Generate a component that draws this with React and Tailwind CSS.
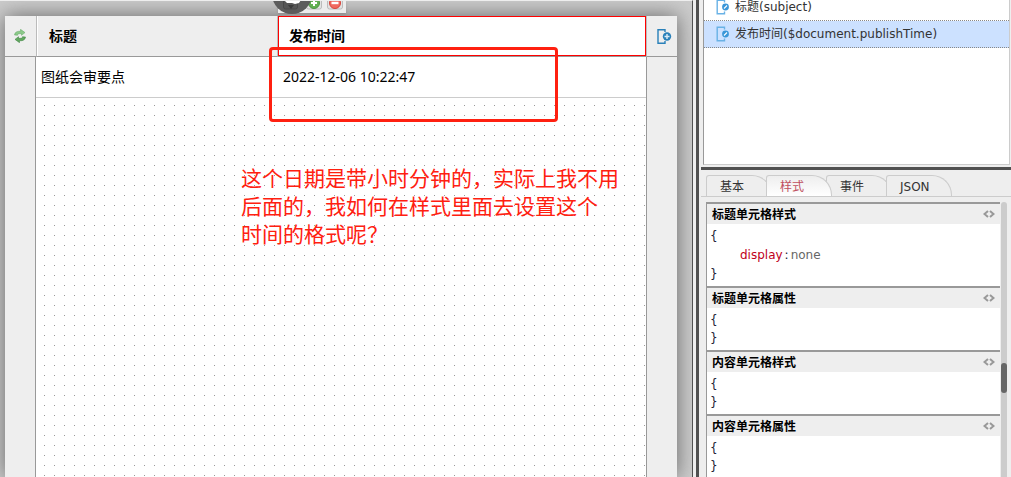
const fields = [
    { id: 'subject', label: '标题(subject)' },
    { id: 'publishTime', label: '发布时间($document.publishTime)', selected: true },
];

const tabs = ['基本', '样式', '事件', 'JSON'];

const sections = [
    { title: '标题单元格样式', rules: [{ name: 'display', value: 'none' }] },
    { title: '标题单元格属性', rules: [] },
    { title: '内容单元格样式', rules: [] },
    { title: '内容单元格属性', rules: [] },
];

const FieldIcon = () => (
    <svg width="13" height="16" viewBox="0 0 13 16" fill="none" className="shrink-0">
        <path d="M8.5 3.5V1.2H1.2v13.6h7.3v-2.3" stroke="#69b2e6" strokeWidth="1.4" />
        <circle cx="9.500" cy="8" r="3.400" fill="#3a96d8" />
        <path d="M8 9.500l3-3" stroke="#fff" strokeWidth="1.1" />
    </svg>
);

const AddColumnIcon = () => (
    <svg width="16" height="17" viewBox="0 0 16 17" fill="none" className="ml-[3px]">
        <path d="M9 4V1.700H2v13.600h7V13" stroke="#2980b9" strokeWidth="1.4" />
        <circle cx="11" cy="8.500" r="4.200" fill="#2980b9" />
        <path d="M11 6v5M8.500 8.500h5" stroke="#dcecf6" strokeWidth="1.4" />
    </svg>
);

const RefreshIcon = () => (
    <svg width="12" height="14" viewBox="0 0 12 14" className="mr-[2px]">
        <path d="M.5 6C.8 3 3 2.200 6.500 2.200V.3L11 3.600 7.500 6.300V4.700C4.500 4.500 3.500 4.900 3.500 6.300z" fill="#8cc98a" stroke="#5fa660" strokeWidth=".5" />
        <path d="M11.500 8C11.200 11 9 11.800 5.500 11.800v1.900L1 10.400l3.500-2.700v1.600C7.500 9.500 8.500 9.100 8.500 7.700z" fill="#62a860" stroke="#357c38" strokeWidth=".5" />
    </svg>
);

const CodeIcon = () => (
    <svg width="12" height="8" viewBox="0 0 12 8" fill="none" stroke="#999" strokeWidth="2">
        <path d="M5 1L1.500 4 5 7M7 1l3.500 3L7 7" />
    </svg>
);

const FloatingTools = () => (
    <div className="absolute left-[278px] top-0 h-[12px] w-[68px] bg-[#ececec] shadow">
        <svg width="96" height="16" viewBox="-24 0 96 16" className="absolute -left-[24px] -top-px max-w-none">
            <rect x="28.500" y="-6" width="15" height="15" rx="2" fill="#e2e2e2" stroke="#bbb" />
            <circle cx="36" cy="3" r="5.500" fill="#62b052" stroke="#4c9640" />
            <path d="M36 0v6M33 3h6" stroke="#fff" strokeWidth="2" />
            <rect x="49.500" y="-6" width="15" height="15" rx="2" fill="#e2e2e2" stroke="#bbb" />
            <circle cx="57" cy="3" r="5.500" fill="#f06a60" stroke="#d8443a" />
            <path d="M53.500 3h7" stroke="#fff" strokeWidth="2.400" />
            <circle cx="14" cy="-6" r="20" fill="#5c5c5c" />
            <rect x="5.500" y="-6" width="14" height="15" rx="2" fill="#555" stroke="#484848" />
            <path d="M10 5h6l-3 4z" fill="#3a3a3a" />
            <path d="M6 0h17L21 3l-4 1-3-1-5 0z" fill="#fff" />
        </svg>
    </div>
);

const Designer = () => (
    <main className="relative flex min-w-0 flex-1 flex-col overflow-hidden border-t border-r border-t-[#eee] border-r-[#505050] bg-[#ccc] px-[5px] pt-[15px] pr-[15px]">
        <div className="flex-1 bg-white shadow-[0_0_20px_#666]">
            <table className="h-full w-full table-fixed border-separate border-spacing-0 text-left text-sm text-black">
                <colgroup>
                    <col className="w-[31px]" />
                    <col className="w-[241px]" />
                    <col />
                    <col className="w-[31px]" />
                </colgroup>
                <thead>
                    <tr className="h-[41px] bg-[#eee]">
                        <th className="border-b border-[#999] p-0">
                            <button type="button" aria-label="refresh" className="flex w-full justify-center">
                                <RefreshIcon />
                            </button>
                        </th>
                        <th className="border-b border-l border-b-[#999] border-l-[#bbb] px-3 py-0 shadow-[inset_1px_0_#fff]">标题</th>
                        <th className="border-b border-l border-b-[#999] border-l-[#bbb] p-0">
                            <div className="flex h-10 items-center border border-[#f00] bg-white px-[10px]">发布时间</div>
                        </th>
                        <th className="border-b border-l border-b-[#999] border-l-[#bbb] p-0">
                            <button type="button" aria-label="add column" className="flex w-full justify-center">
                                <AddColumnIcon />
                            </button>
                        </th>
                    </tr>
                </thead>
                <tbody>
                    <tr className="h-[41px]">
                        <td className="border-r border-[#999] bg-[#eee] p-0" />
                        <td className="border-b border-[#ccc] px-[5px] py-0">图纸会审要点</td>
                        <td className="border-b border-[#ccc] px-[6px] py-0">2022-12-06 10:22:47</td>
                        <td className="border-l border-[#999] bg-[#eee] p-0" />
                    </tr>
                    <tr>
                        <td className="border-r border-[#999] bg-[#eee] p-0" />
                        <td colSpan={2} className="bg-[conic-gradient(from_270deg_at_1px_1px,#999_90deg,transparent_0)] bg-[length:10px_10px] bg-[position:8px_7px] p-0" />
                        <td className="border-l border-[#999] bg-[#eee] p-0" />
                    </tr>
                </tbody>
            </table>
        </div>

        <FloatingTools />

        {/* Annotation */}
        <div className="absolute top-[46px] left-[269px] h-[75px] w-[289px] rounded-[4px] border-3 border-[#ff2010]" />
        <p className="absolute top-[163px] left-[241px] text-[21px] leading-7 whitespace-nowrap text-[#ff2010]">
            这个日期是带小时分钟的，实际上我不用
            <br />
            后面的，我如何在样式里面去设置这个
            <br />
            时间的格式呢？
        </p>
    </main>
);

const FieldList = () => (
    <div className="mr-px ml-[2px] h-[165px] shrink-0 overflow-hidden border-b border-l border-r border-b-[#ccc] border-l-[#999] border-r-[#ccc] bg-white">
        <ul className="-mt-[6px]">
            {fields.map((field) => (
                <li key={field.id} className={field.selected ? 'bg-[#cce1ff]' : 'bg-white'}>
                    <a href="#" className="flex h-[27px] items-center gap-[6px] border-b border-dotted border-[#888] pl-3 text-[#333]">
                        <FieldIcon />
                        {field.label}
                    </a>
                </li>
            ))}
        </ul>
    </div>
);

const Tabs = () => (
    <div role="tablist" className="flex h-[27px] shrink-0 items-end border-b border-[#ccc] pl-[5px]">
        {tabs.map((tab) => {
            const active = tab === '样式';
            return (
                <button
                    key={tab}
                    type="button"
                    role="tab"
                    aria-selected={active}
                    className={
                        active
                            ? 'relative z-10 -mr-[6px] h-[21px] w-[66px] rounded-tl-[3px] rounded-tr-[20px] border border-b-0 border-[#ccc] bg-linear-to-b from-[#eee] to-white pt-[2px] pl-[13px] text-left text-[#c05060]'
                            : 'relative -mr-[6px] h-[21px] w-[66px] rounded-tl-[3px] rounded-tr-[20px] border border-b-0 border-[#ccc] bg-[#eee] pt-[2px] pl-[13px] text-left text-[#333]'
                    }
                >
                    {tab}
                </button>
            );
        })}
    </div>
);

const StyleSection = ({ title, rules }) => (
    <section className="border-t-2 border-l border-[#999]">
        <div className="flex h-5 items-center justify-between bg-[#eee] pr-[5px] pl-[5px]">
            <h2 className="pt-[2px] font-bold text-black">{title}</h2>
            <button type="button" aria-label="edit source">
                <CodeIcon />
            </button>
        </div>
        <div className="bg-white py-[3px] pl-[3px] leading-[18px] text-[#223]">
            <div>{'{'}</div>
            {rules.map((rule) => (
                <div key={rule.name} className="pl-[30px] leading-5">
                    <span className="text-[#c00020]">{rule.name}</span>
                    <span className="px-[2px]">:</span>
                    <span className="text-[#666]">{rule.value}</span>
                </div>
            ))}
            <div>{'}'}</div>
        </div>
    </section>
);

const Inspector = () => (
    <aside className="ml-[2px] flex w-[310px] shrink-0 flex-col text-xs [font-family:'DejaVu_Sans','Noto_Sans_CJK_SC',sans-serif]">
        <FieldList />
        <div className="mt-[2px] h-[3px] shrink-0 bg-[#505050]" />
        <Tabs />
        <div className="mt-[5px] ml-[5px] flex min-h-0 flex-1">
            <div className="min-w-0 flex-1 overflow-hidden">
                {sections.map((section) => (
                    <StyleSection key={section.title} {...section} />
                ))}
            </div>
            <div className="mr-1 ml-px w-[6px] rounded-t-full bg-[#ccc] pt-[161px]">
                <div className="h-[30px] rounded-full bg-[#666]" />
            </div>
        </div>
    </aside>
);

const App = () => (
    <div className="flex h-screen overflow-hidden bg-[#eee] [font-family:'Noto_Sans','Noto_Sans_CJK_SC',sans-serif]">
        <Designer />
        <div className="ml-[3px] w-[3px] shrink-0 bg-[#505050]" />
        <Inspector />
    </div>
);

export default App;
